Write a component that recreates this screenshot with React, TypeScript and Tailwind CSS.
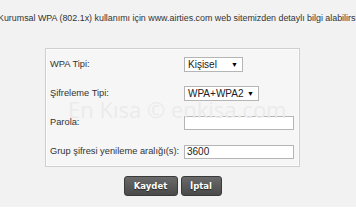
import React from 'react';

const font = { fontFamily: '"Liberation Sans", Arial, sans-serif' };

interface SelectBoxProps {
    value: string;
    width: string;
}

const SelectBox: React.FC<SelectBoxProps> = ({ value, width }) => {
    return (
        <div className={`${width} h-[15px] flex items-center justify-between bg-white border border-[#b5b5b5] pl-[3px] pr-[4px]`}>
            <span className="text-[10px] text-[#222] leading-none">{value}</span>
            <span className="text-[7px] text-black leading-none">▼</span>
        </div>
    );
};

const TextBox: React.FC<{ value?: string }> = ({ value }) => {
    return (
        <div className="w-[110px] h-[14px] flex items-center bg-white border border-[#b5b5b5] pl-[2px]">
            <span className="text-[10px] text-[#222] leading-none">{value}</span>
        </div>
    );
};

const rows: { label: string; control: React.ReactNode }[] = [
    { label: 'WPA Tipi:', control: <SelectBox value="Kişisel" width="w-[59px]" /> },
    { label: 'Şifreleme Tipi:', control: <SelectBox value="WPA+WPA2" width="w-[75px]" /> },
    { label: 'Parola:', control: <TextBox /> },
    { label: 'Grup şifresi yenileme aralığı(s):', control: <TextBox value="3600" /> },
];

export default function App() {
    return (
        <div className="relative w-[356px] h-[220px] overflow-hidden bg-white" style={font}>
            <div className="h-[207px] bg-[#f2f2f2] flex flex-col">
                <div className="pt-[11px] ml-[-2px] whitespace-nowrap text-[8.9px] leading-[14px] text-[#333]">
                    Kurumsal WPA (802.1x) kullanımı için www.airties.com web sitemizden detaylı bilgi alabilirsiniz.
                </div>

                <div className="mt-[23px] ml-[45px] w-[255px] h-[119px] border border-[#cfcfcf] bg-[#f6f6f6] shadow-[inset_0_0_0_1px_#fbfbfb] pt-[1px]">
                    {rows.map((row) => (
                        <div key={row.label} className="h-[29px] grid grid-cols-[134px_1fr] items-center pl-[4px]">
                            <span className="text-[9.3px] text-[#333] leading-none">{row.label}</span>
                            {row.control}
                        </div>
                    ))}
                </div>

                <div className="mt-[9px] ml-[45px] w-[255px] flex justify-center gap-[3px]">
                    <button
                        type="button"
                        className="w-[54px] h-[20px] rounded-[3px] border border-[#3a3a3a] bg-gradient-to-b from-[#6a6a6a] to-[#4a4a4a] text-white font-bold text-[8.5px] [text-shadow:0_1px_1px_#222]"
                        style={{ fontFamily: '"DejaVu Sans", Verdana, sans-serif' }}
                    >
                        Kaydet
                    </button>
                    <button
                        type="button"
                        className="w-[41px] h-[20px] rounded-[3px] border border-[#3a3a3a] bg-gradient-to-b from-[#6a6a6a] to-[#4a4a4a] text-white font-bold text-[8.5px] [text-shadow:0_1px_1px_#222]"
                        style={{ fontFamily: '"DejaVu Sans", Verdana, sans-serif' }}
                    >
                        İptal
                    </button>
                </div>
            </div>

            <div
                className="absolute left-[68px] top-[98px] text-[22px] leading-none text-[#ebebeb] whitespace-nowrap pointer-events-none"
                style={{ fontFamily: '"Open Sans", sans-serif' }}
            >
                En Kısa © enkisa.com
            </div>
        </div>
    );
}
